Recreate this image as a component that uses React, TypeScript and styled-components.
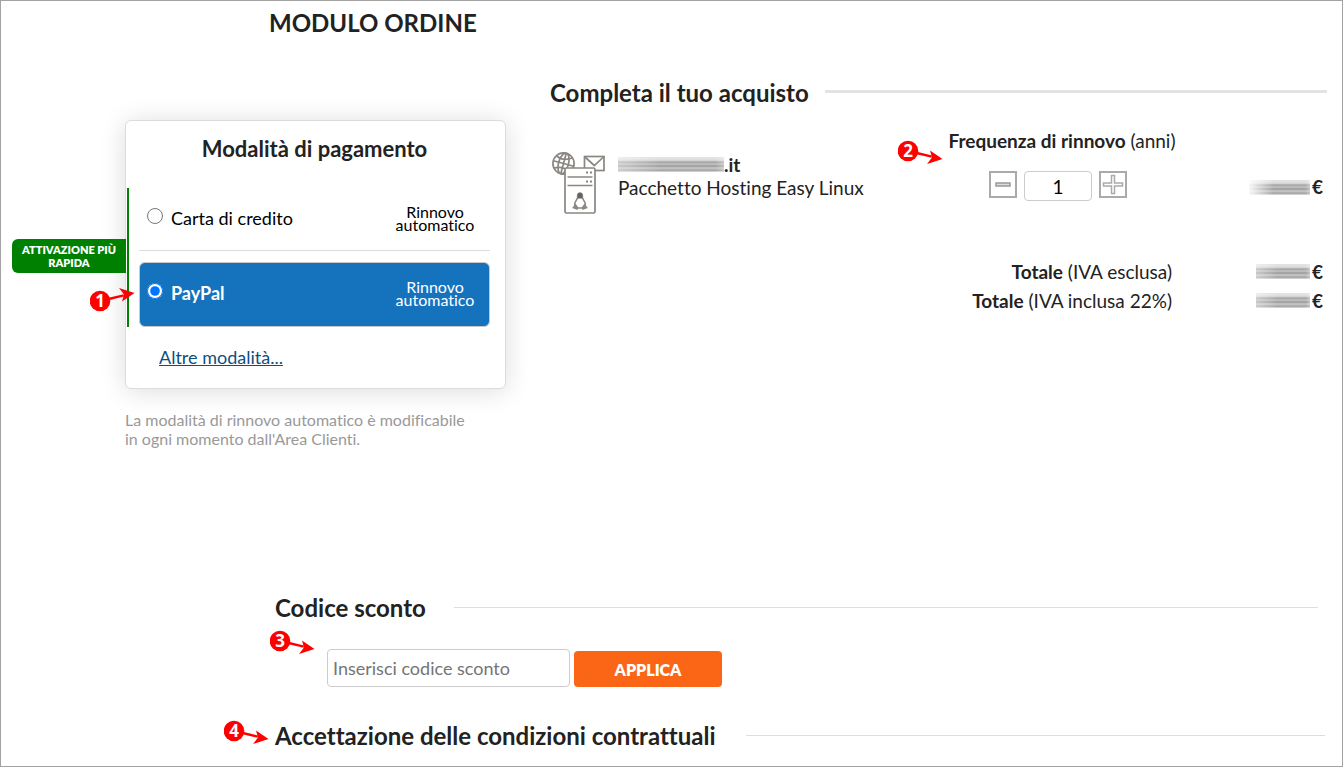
import React, { useState } from "react";
import styled, { createGlobalStyle, css } from "styled-components";

const Global = createGlobalStyle`
  *, *::before, *::after { box-sizing: border-box; }
  body {
    margin: 0;
    background: #fff;
    color: #222;
    font-family: Lato, "Open Sans", sans-serif;
    font-size: 19px;
    font-variant-ligatures: none;
    line-height: 24px;
  }
  h1, h2, p, dl, dd, dt, fieldset { margin: 0; padding: 0; }
  fieldset { border: 0; min-width: 0; }
  input, button { font-family: inherit; }
`;

const Page = styled.div`
  min-height: 100vh;
  border: 1px solid #a3a3a3;
  padding: 7px 15px 12px 124px;
`;

const PageTitle = styled.h1`
  padding-left: 144px;
  font-size: 24px;
  font-weight: 700;
  line-height: 30px;
`;

const Columns = styled.main`
  display: flex;
  align-items: flex-start;
  gap: 44px;
  margin-top: 40px;
`;

const PaymentColumn = styled.section`
  flex: 0 0 381px;
  padding-top: 42px;
`;

const Card = styled.div`
  border: 1px solid #dcdcdc;
  border-radius: 6px;
  padding: 13px 15px 19px 1px;
  background: #fff;
  box-shadow: 0 2px 26px rgba(0, 0, 0, 0.14);
`;

const CardTitle = styled.h2`
  padding-left: 12px;
  font-size: 22px;
  font-weight: 700;
  line-height: 30px;
  text-align: center;
`;

const Options = styled.fieldset`
  position: relative;
  margin-top: 24px;
  border-left: 2px solid #008000;
  padding-left: 10px;
`;

const SpeedBadge = styled.span`
  position: absolute;
  top: 51px;
  right: 100%;
  width: 114px;
  margin-right: 3px;
  border-radius: 6px 0 0 6px;
  padding: 4px 2px;
  background: #008000;
  color: #fff;
  font-size: 11px;
  font-weight: 800;
  line-height: 13px;
  text-align: center;
`;

const Option = styled.label<{ $selected?: boolean }>`
  display: flex;
  align-items: center;
  gap: 8px;
  height: 63px;
  padding: 0 14px 3px 8px;
  border-bottom: 1px solid #dcdcdc;
  color: #000;
  font-size: 18px;
  ${(p) =>
    p.$selected &&
    css`
      height: 65px;
      margin-top: 11px;
      border: 1px solid #c8c8c8;
      border-radius: 6px;
      padding: 0 13px 3px 7px;
      background: #1573be;
      color: #fff;
      font-weight: 700;
    `}
`;

const Radio = styled.input`
  width: 16px;
  height: 16px;
  margin: 0 0 4px;
`;

const Renewal = styled.span`
  width: 82px;
  margin-left: auto;
  font-size: 16px;
  font-weight: 400;
  line-height: 13px;
  text-align: center;
`;

const MoreLink = styled.a`
  display: block;
  width: fit-content;
  margin: 18px 0 0 32px;
  color: #0d4f82;
  font-size: 18px;
`;

const Note = styled.p`
  margin-top: 21px;
  color: #999;
  font-size: 16px;
  line-height: 19px;
`;

const OrderColumn = styled.section`
  flex: 1;
  min-width: 0;
`;

const Heading = styled.div<{ $gap: number; $thick?: boolean; $end?: number }>`
  position: relative;
  display: flex;
  align-items: center;
  gap: ${(p) => p.$gap}px;
  padding-right: ${(p) => p.$end ?? 0}px;

  h2 {
    font-size: 24px;
    font-weight: 700;
    line-height: 30px;
    white-space: nowrap;
  }
  &::after {
    content: "";
    flex: 1;
    height: ${(p) => (p.$thick ? 3 : 1)}px;
    margin-bottom: ${(p) => (p.$thick ? 3 : 1)}px;
    background: ${(p) => (p.$thick ? "#e4e2e2" : "#dedede")};
  }
`;

const Item = styled.div`
  display: grid;
  grid-template-columns: 1fr 228px 147px;
  margin-top: 21px;
  padding-right: 4px;
`;

const Product = styled.div`
  display: flex;
  gap: 10px;
  padding-top: 22px;
`;

const ProductName = styled.div`
  padding-top: 2px;
`;

const Domain = styled.div`
  display: flex;
  align-items: center;
  height: 23px;
  font-weight: 700;
`;

const Redacted = styled.span<{ $width: number; $fade?: boolean }>`
  width: ${(p) => p.$width}px;
  height: 15px;
  background:
    linear-gradient(90deg, rgba(255, 255, 255, ${(p) => (p.$fade ? 0.9 : 0.4)}) 0, transparent 40%, transparent 92%, rgba(255, 255, 255, 0.3)),
    linear-gradient(#e2e2e2 0 2px, #cfcfcf 4px, #999 5px, #b8b8b8 6px, #bdbdbd 8px, #8c8c8c 9px, #bcbcbc 10px, #c4c4c4 12px, #999 13px, #e0e0e0);
`;

const Frequency = styled.div`
  position: relative;
`;

const FrequencyLabel = styled.label`
  display: block;
  white-space: nowrap;
  text-align: center;
`;

const Stepper = styled.div`
  display: flex;
  justify-content: center;
  gap: 7px;
  margin-top: 18px;
  padding-right: 8px;
`;

const StepButton = styled.button`
  width: 28px;
  height: 27px;
  border: 2px solid #aaa;
  padding: 0;
  background: #fff;
  svg { display: block; }
`;

const Quantity = styled.input`
  width: 68px;
  height: 30px;
  border: 1px solid #ccc;
  border-radius: 4px;
  padding: 0;
  color: #000;
  font-size: 19px;
  text-align: center;
`;

const Price = styled.div`
  display: flex;
  align-items: center;
  justify-content: flex-end;
  gap: 2px;
  font-weight: 700;
`;

const ItemPrice = styled(Price)`
  align-self: start;
  height: 24px;
  margin-top: 46px;
`;

const Totals = styled.dl`
  display: grid;
  grid-template-columns: 1fr 151px;
  margin-top: 42px;
  padding-right: 4px;
  line-height: 29px;
  dt { text-align: right; }
`;

const Discount = styled.section`
  margin: 145px 0 0 150px;
`;

const DiscountForm = styled.form`
  position: relative;
  display: flex;
  align-items: flex-end;
  gap: 4px;
  margin-top: 26px;
  padding-left: 52px;
`;

const CodeInput = styled.input`
  width: 243px;
  height: 38px;
  border: 1px solid #ccc;
  border-radius: 4px;
  padding: 0 5px;
  font-size: 18px;
  &::placeholder { color: #757575; }
`;

const ApplyButton = styled.button`
  width: 148px;
  height: 36px;
  border: 0;
  border-radius: 4px;
  background: #fa6615;
  color: #fff;
  font-size: 16px;
  font-weight: 800;
`;

const Terms = styled.section`
  margin: 34px 0 0 150px;
`;

const MarkerBox = styled.span<{ $left: number; $top: number }>`
  position: absolute;
  left: ${(p) => p.$left}px;
  top: ${(p) => p.$top}px;
  width: 45px;
  height: 36px;
  pointer-events: none;
  svg { display: block; }
`;

/* Numbered step: a red disc with an arrow that leaves it to the right. */
function Marker({ n, left, top, up }: { n: number; left: number; top: number; up?: boolean }) {
  return (
    <MarkerBox $left={left} $top={top}>
      <svg width="45" height="36" viewBox="0 0 45 36">
        <g transform={up ? "matrix(1 0 0 -1 0 36)" : undefined} fill="#f00">
          <circle cx="10" cy="18" r="10.300" />
          <path d="M19 18.800 34 22.500 33.500 24.800 18.500 21.200z" />
          <path d="M32 17.500 44.500 26 29 31 34 24.600z" />
        </g>
        <text x="10" y="24" fill="#fff" fontFamily="Open Sans, sans-serif" fontSize="17" fontWeight="700" textAnchor="middle">
          {n}
        </text>
      </svg>
    </MarkerBox>
  );
}

function HostingIcon() {
  return (
    <svg width="58" height="64" viewBox="0 0 58 64" fill="none" stroke="#8a8782" strokeWidth="1.7" aria-hidden="true">
      <circle cx="13.5" cy="12.5" r="10.6" />
      <ellipse cx="13.5" cy="12.5" rx="5" ry="10.6" transform="rotate(15 13.5 12.5)" />
      <path d="M16.200 2.300 10.800 22.700M3.300 9.700 23.700 15.300M6.500 5q7 5.500 15.500 2M4 17q9-2.500 15.500 4" />
      <rect x="34.500" y="5.500" width="19.500" height="14" fill="#fff" />
      <path d="m35 6 9.300 8.500L53.500 6" />
      <rect x="15" y="17" width="30" height="45" rx="1.500" fill="#fff" />
      <path d="M17.500 26h25M17.500 34.500h25" />
      <path d="M36 21.500h2M40 21.500h2M36 30.500h2M40 30.500h2" strokeWidth="2" />
      <path d="M30 42c-2.300 0-2.600 2-2.400 4.500-.5 2.500-2.600 4-3 6.500l1 4h8.800l1-4c-.4-2.500-2.500-4-3-6.500C32.600 44 32.300 42 30 42z" strokeWidth="1.500" />
      <path d="M27.800 43q2-2.500 4.400 0v4.500h-4.400z" fill="#66635e" stroke="none" />
      <path d="m25.500 52.500-3.300 4.500 5.300 2 .8-2.500zM34.500 52.500l3.300 4.500-5.300 2-.8-2.500z" fill="#8b8883" stroke="none" />
    </svg>
  );
}

export default function App() {
  const [method, setMethod] = useState("paypal");
  const [years, setYears] = useState(1);

  return (
    <>
      <Global />
      <Page>
        <PageTitle>MODULO ORDINE</PageTitle>
        <Columns>
          <PaymentColumn>
            <Card>
              <CardTitle>Modalità di pagamento</CardTitle>
              <Options aria-label="Modalità di pagamento">
                <SpeedBadge>ATTIVAZIONE PIÙ RAPIDA</SpeedBadge>
                <Option $selected={method === "card"}>
                  <Radio type="radio" name="method" checked={method === "card"} onChange={() => setMethod("card")} />
                  Carta di credito
                  <Renewal>Rinnovo automatico</Renewal>
                </Option>
                <Option $selected={method === "paypal"}>
                  <Radio type="radio" name="method" checked={method === "paypal"} onChange={() => setMethod("paypal")} />
                  PayPal
                  <Renewal>Rinnovo automatico</Renewal>
                </Option>
                <Marker n={1} left={-39} top={95} up />
              </Options>
              <MoreLink href="#altre">Altre modalità...</MoreLink>
            </Card>
            <Note>
              La modalità di rinnovo automatico è modificabile
              <br />
              in ogni momento dall'Area Clienti.
            </Note>
          </PaymentColumn>

          <OrderColumn>
            <Heading $gap={16} $thick>
              <h2>Completa il tuo acquisto</h2>
            </Heading>
            <Item>
              <Product>
                <HostingIcon />
                <ProductName>
                  <Domain>
                    <Redacted $width={106} />
                    .it
                  </Domain>
                  Pacchetto Hosting Easy Linux
                </ProductName>
              </Product>
              <Frequency>
                <Marker n={2} left={-50} top={4} />
                <FrequencyLabel htmlFor="years">
                  <b>Frequenza di rinnovo</b> (anni)
                </FrequencyLabel>
                <Stepper>
                  <StepButton type="button" aria-label="Meno" onClick={() => setYears(Math.max(1, years - 1))}>
                    <svg width="24" height="23" viewBox="0 0 24 23" fill="#ddd" stroke="#999" strokeWidth="1.500">
                      <rect x="5" y="10" width="14" height="3" />
                    </svg>
                  </StepButton>
                  <Quantity id="years" value={years} onChange={(e) => setYears(Number(e.target.value) || 1)} />
                  <StepButton type="button" aria-label="Più" onClick={() => setYears(years + 1)}>
                    <svg width="24" height="23" viewBox="0 0 24 23" fill="#fff" stroke="#aaa" strokeWidth="1.500">
                      <path d="M10.500 2.500h3V10h8v3h-8v7.500h-3V13h-8v-3h8z" />
                    </svg>
                  </StepButton>
                </Stepper>
              </Frequency>
              <ItemPrice>
                <Redacted $width={61} $fade />€
              </ItemPrice>
            </Item>
            <Totals>
              <dt>
                <b>Totale</b> (IVA esclusa)
              </dt>
              <Price as="dd">
                <Redacted $width={54} />€
              </Price>
              <dt>
                <b>Totale</b> (IVA inclusa 22%)
              </dt>
              <Price as="dd">
                <Redacted $width={54} />€
              </Price>
            </Totals>
          </OrderColumn>
        </Columns>

        <Discount>
          <Heading $gap={28} $end={9}>
            <h2>Codice sconto</h2>
          </Heading>
          <DiscountForm onSubmit={(e) => e.preventDefault()}>
            <Marker n={3} left={-5} top={-26} />
            <CodeInput aria-label="Codice sconto" placeholder="Inserisci codice sconto" />
            <ApplyButton type="submit">APPLICA</ApplyButton>
          </DiscountForm>
        </Discount>

        <Terms>
          <Heading $gap={30} $end={2}>
            <Marker n={4} left={-51} top={-8} />
            <h2>Accettazione delle condizioni contrattuali</h2>
          </Heading>
        </Terms>
      </Page>
    </>
  );
}
